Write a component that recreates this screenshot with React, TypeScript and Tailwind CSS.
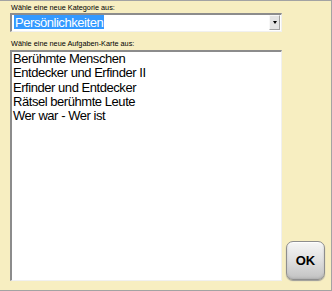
import React from 'react';

const items = [
  'Berühmte Menschen',
  'Entdecker und Erfinder II',
  'Erfinder und Entdecker',
  'Rätsel berühmte Leute',
  'Wer war - Wer ist',
];

export default function App() {
  return (
    <div className="w-[332px] h-[291px] bg-[#f7eec1] border-t border-r border-b border-[#a3a3a3] pl-[10px] pt-[2px] flex flex-col font-['Liberation_Sans',Arial,sans-serif]">
      <div className="h-[10px] leading-[10px] text-[7.3px] pl-[1px] text-black">Wähle eine neue Kategorie aus:</div>

      {/* Kategorie select */}
      <div className="w-[272px] h-[19px] bg-white border-t-2 border-l-2 border-t-[#8c8c8c] border-l-[#8c8c8c] border-b border-r border-b-[#f0f0f0] border-r-[#f0f0f0] flex items-start">
        <span className="ml-[2px] px-[1px] h-[14px] leading-[15px] text-[13px] tracking-[-0.45px] bg-[#3399ff] text-white overflow-hidden">Persönlichkeiten</span>
        <div className="ml-auto mr-[1px] w-[11px] h-[15px] bg-[#e4e4e4] border border-[#f8f8f8] border-r-[#a0a0a0] border-b-[#a0a0a0] flex items-center justify-center">
          <div className="w-0 h-0 border-l-[2.5px] border-r-[2.5px] border-t-[3px] border-l-transparent border-r-transparent border-t-black" />
        </div>
      </div>

      <div className="mt-[7px] h-[10px] leading-[10px] text-[7.3px] pl-[1px] text-black">Wähle eine neue Aufgaben-Karte aus:</div>

      <div className="mt-[1px] flex items-end gap-[4px]">
        {/* Aufgaben list */}
        <div className="w-[272px] h-[231px] bg-white border-t-2 border-l-2 border-t-[#8c8c8c] border-l-[#8c8c8c] border-b border-r border-b-[#f0f0f0] border-r-[#f0f0f0] pl-[1px]">
          {items.map((it) => (
            <div key={it} className="h-[14.25px] leading-[14.25px] text-[13px] tracking-[-0.45px] text-black whitespace-nowrap">{it}</div>
          ))}
        </div>

        <button className="mb-[1px] w-[39px] h-[39px] rounded-[7px] border border-[#8e8e8e] bg-gradient-to-b from-[#f6f6f6] via-[#e0e0e0] to-[#c2c2c2] shadow-[inset_0_1px_1px_#ffffff,inset_0_-1px_2px_#b0b0b0,0_1px_1px_#9a9a9a] flex items-center justify-center text-[13px] font-bold text-black">
          OK
        </button>
      </div>
    </div>
  );
}
